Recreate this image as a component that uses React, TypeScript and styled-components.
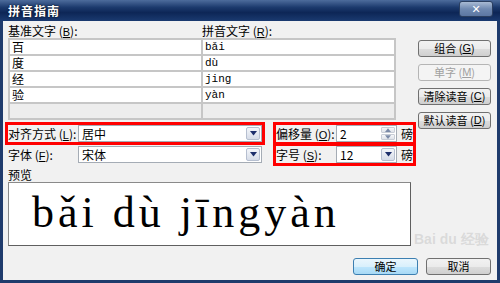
import React, {FunctionComponent} from 'react';
import styled, {createGlobalStyle} from 'styled-components';

const GlobalStyle = createGlobalStyle`
  html, body {
    margin: 0;
    padding: 0;
    background: #fff;
  }
  body {
    font-family: "Noto Sans CJK SC", "Liberation Sans", sans-serif;
    font-size: 12px;
    color: #000;
  }
`;

const Window = styled.div`
  position: relative;
  width: 500px;
  height: 283px;
  box-sizing: border-box;
  display: flex;
  flex-direction: column;
  background: #1f3b6c;
  overflow: hidden;
`;

const TitleBar = styled.div`
  height: 21px;
  flex: none;
  display: flex;
  align-items: center;
  justify-content: space-between;
  padding: 0 7px 0 8px;
  background: linear-gradient(#4d6c9c 0%, #1c3a6d 35%, #0d2656 60%, #1a3a70 100%);
`;

const Title = styled.span`
  color: #fff;
  font-weight: bold;
  font-size: 12px;
  letter-spacing: 1px;
  text-shadow: 0 0 2px #000;
`;

const CloseBtn = styled.div`
  width: 32px;
  height: 14px;
  margin-top: -3px;
  display: flex;
  align-items: center;
  justify-content: center;
  border: 1px solid #2b3f60;
  border-radius: 3px;
  background: linear-gradient(#a9bbd4, #6f89b1 50%, #5c77a2);
  color: #fff;
  font-family: "DejaVu Sans", sans-serif;
  font-weight: bold;
  font-size: 11px;
  line-height: 1;
`;

const Body = styled.div`
  flex: 1;
  margin: 0 3px 3px 3px;
  padding: 3px 6px 0 5px;
  background: #f1f1f1;
  display: grid;
  grid-template-columns: 410px 73px;
  grid-template-areas:
    "table side"
    "opts side"
    "plabel ."
    "preview ."
    "footer footer";
  grid-template-rows: auto auto auto auto 1fr;
  align-content: start;
`;

const TableArea = styled.div`
  grid-area: table;
  width: 388px;
`;

const HeadRow = styled.div`
  height: 14px;
  display: grid;
  grid-template-columns: 194px 194px;
  align-items: center;
  line-height: 14px;
`;

const Mn = styled.span`
  text-decoration: underline;
  font-family: "Liberation Sans", sans-serif;
  font-size: 11px;
`;

const Grid = styled.div`
  display: grid;
  grid-template-columns: 191px 191px;
  grid-auto-rows: 14px;
  gap: 2px;
  padding: 2px;
  background: #c6c6c6;
`;

const Cell = styled.div<{$empty?: boolean; $pinyin?: boolean}>`
  background: ${p => (p.$empty ? '#ededed' : '#fff')};
  padding-left: 2px;
  height: 14px;
  display: flex;
  align-items: center;
  font-size: ${p => (p.$pinyin ? '11px' : '12px')};
  line-height: 1;
  font-family: ${p => (p.$pinyin ? '"Liberation Mono", monospace' : '"Noto Sans CJK SC", sans-serif')};
`;

const Side = styled.div`
  grid-area: side;
  display: flex;
  flex-direction: column;
  gap: 7px;
  padding-top: 16px;
`;

const Btn = styled.div<{$disabled?: boolean; $primary?: boolean}>`
  height: 17px;
  box-sizing: border-box;
  display: flex;
  align-items: center;
  justify-content: center;
  white-space: nowrap;
  border: 1px solid ${p => (p.$disabled ? '#b5b5b5' : p.$primary ? '#3c7fb1' : '#707070')};
  border-radius: 3px;
  background: ${p =>
    p.$primary
      ? 'linear-gradient(#eaf6fd 0%, #d9f0fc 50%, #bee6fd 51%, #a7d9f5 100%)'
      : p.$disabled
      ? '#f4f4f4'
      : 'linear-gradient(#f2f2f2 0%, #ebebeb 50%, #dddddd 51%, #cfcfcf 100%)'};
  color: ${p => (p.$disabled ? '#a0a0a0' : '#000')};
  font-size: 11px;
  line-height: 1;
`;

const Options = styled.div`
  grid-area: opts;
  display: flex;
  flex-direction: column;
  gap: 4px;
  padding-top: 5px;
`;

const OptRow = styled.div`
  display: flex;
  align-items: center;
`;

const Group = styled.div<{$marked?: boolean; $shift?: number}>`
  display: flex;
  align-items: center;
  height: 17px;
  margin-left: ${p => p.$shift ?? 0}px;
  outline: ${p => (p.$marked ? '3px solid #ff0000' : 'none')};
  outline-offset: 0;
`;

const Label = styled.span<{$w: number}>`
  width: ${p => p.$w}px;
  flex: none;
  white-space: nowrap;
`;

const Field = styled.div<{$w: number}>`
  width: ${p => p.$w}px;
  height: 17px;
  box-sizing: border-box;
  border: 1px solid #a5acb5;
  background: #fff;
  display: flex;
  align-items: center;
  justify-content: space-between;
  padding: 1px 1px 1px 3px;
`;

const ArrowBtn = styled.div`
  width: 14px;
  height: 13px;
  box-sizing: border-box;
  border: 1px solid #b6bfd0;
  border-radius: 2px;
  background: linear-gradient(#f4f6fa, #d6dce8);
  display: flex;
  align-items: center;
  justify-content: center;
`;

const Spin = styled.div`
  width: 14px;
  height: 13px;
  display: flex;
  flex-direction: column;
  gap: 1px;
`;

const SpinHalf = styled.div`
  flex: 1;
  border: 1px solid #c8cdd6;
  border-radius: 1px;
  background: linear-gradient(#f6f7f9, #dfe3ea);
  display: flex;
  align-items: center;
  justify-content: center;
`;

const Unit = styled.span`
  margin-left: 4px;
`;

const PreviewLabel = styled.div`
  grid-area: plabel;
  margin-top: 4px;
  height: 15px;
  line-height: 15px;
`;

const Preview = styled.div`
  grid-area: preview;
  width: 403px;
  height: 64px;
  box-sizing: border-box;
  border: 1px solid #8a8a8a;
  border-right-color: #5f5f5f;
  border-bottom-color: #5f5f5f;
  background: #fff;
  padding-left: 23px;
  font-family: "Liberation Serif", "DejaVu Serif", serif;
  font-size: 44px;
  letter-spacing: 4px;
  line-height: 60px;
  white-space: nowrap;
`;

const Footer = styled.div`
  grid-area: footer;
  display: flex;
  justify-content: flex-end;
  gap: 8px;
  padding-top: 12px;
  & > * {
    width: 65px;
  }
`;

const Watermark = styled.div`
  position: absolute;
  left: 414px;
  top: 232px;
  color: rgba(190, 190, 190, 0.45);
  font-family: "Liberation Sans", sans-serif;
  font-weight: bold;
  font-size: 14px;
  pointer-events: none;
  line-height: 1;
`;

const Caret: FunctionComponent<{up?: boolean; color?: string; w?: number}> = ({up, color = '#1d2f6b', w = 7}) => (
  <svg width={w} height={w / 2 + 1} viewBox="0 0 8 5">
    <path d={up ? 'M0 5 L4 0 L8 5 Z' : 'M0 0 L8 0 L4 5 Z'} fill={color} />
  </svg>
);

const rows: Array<[string, string]> = [
  ['百', 'bǎi'],
  ['度', 'dù'],
  ['经', 'jing'],
  ['验', 'yàn'],
];

const App: FunctionComponent = () => {
  return (
    <>
      <GlobalStyle />
      <Window>
        <TitleBar>
          <Title>拼音指南</Title>
          <CloseBtn>✕</CloseBtn>
        </TitleBar>
        <Body>
          <TableArea>
            <HeadRow>
              <span>基准文字 (<Mn>B</Mn>):</span>
              <span>拼音文字 (<Mn>R</Mn>):</span>
            </HeadRow>
            <Grid>
              {rows.map(([base, py]) => (
                <React.Fragment key={base}>
                  <Cell>{base}</Cell>
                  <Cell $pinyin>{py}</Cell>
                </React.Fragment>
              ))}
              <Cell $empty />
              <Cell $empty />
            </Grid>
          </TableArea>

          <Side>
            <Btn>组合 (<Mn>G</Mn>)</Btn>
            <Btn $disabled>单字 (<Mn>M</Mn>)</Btn>
            <Btn>清除读音 (<Mn>C</Mn>)</Btn>
            <Btn>默认读音 (<Mn>D</Mn>)</Btn>
          </Side>

          <Options>
            <OptRow>
              <Group $marked>
                <Label $w={70}>对齐方式 (<Mn>L</Mn>):</Label>
                <Field $w={184}>
                  <span>居中</span>
                  <ArrowBtn><Caret /></ArrowBtn>
                </Field>
              </Group>
              <Group $marked $shift={14}>
                <Label $w={60}>偏移量 (<Mn>O</Mn>):</Label>
                <Field $w={61}>
                  <span>2</span>
                  <Spin>
                    <SpinHalf><Caret up w={6} color="#7a8aa8" /></SpinHalf>
                    <SpinHalf><Caret w={6} color="#7a8aa8" /></SpinHalf>
                  </Spin>
                </Field>
                <Unit>磅</Unit>
              </Group>
            </OptRow>
            <OptRow>
              <Group>
                <Label $w={70}>字体 (<Mn>F</Mn>):</Label>
                <Field $w={184}>
                  <span>宋体</span>
                  <ArrowBtn><Caret /></ArrowBtn>
                </Field>
              </Group>
              <Group $marked $shift={14}>
                <Label $w={60}>字号 (<Mn>S</Mn>):</Label>
                <Field $w={61}>
                  <span>12</span>
                  <ArrowBtn><Caret /></ArrowBtn>
                </Field>
                <Unit>磅</Unit>
              </Group>
            </OptRow>
          </Options>

          <PreviewLabel>预览</PreviewLabel>
          <Preview>bǎi dù jīngyàn</Preview>

          <Footer>
            <Btn $primary>确定</Btn>
            <Btn>取消</Btn>
          </Footer>
        </Body>
        <Watermark>Bai du 经验</Watermark>
      </Window>
    </>
  );
};

export default App;
